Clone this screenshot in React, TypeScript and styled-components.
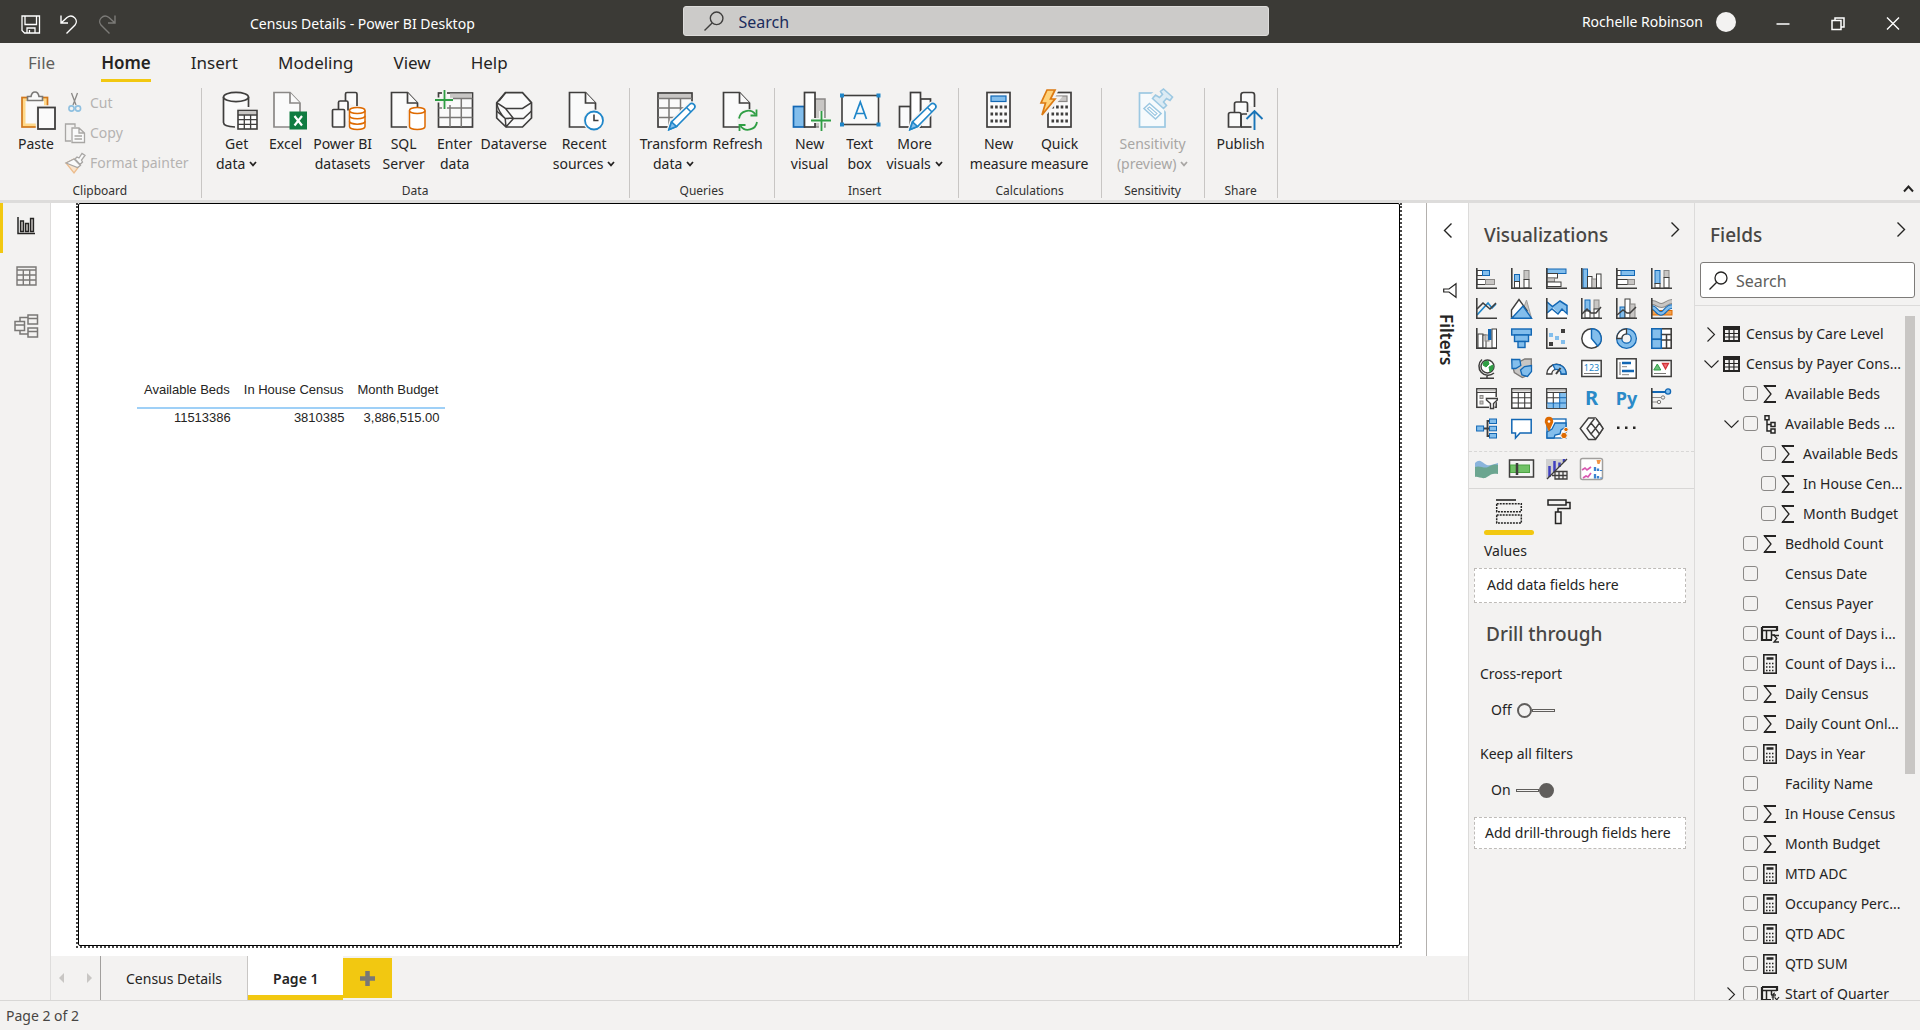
import React, { ReactNode } from "react";
import styled, { createGlobalStyle, css } from "styled-components";

const INK = "#252423";
const LINE = "#3f3e3d";
const BLUE = "#1267b4";
const SKY = "#83beec";
const GREY = "#c8c6c4";
const ORANGE = "#de6a00";
const YELLOW = "#f2c811";
const PANEL = "#f3f2f1";

const GlobalStyle = createGlobalStyle`
  *, *::before, *::after { box-sizing: border-box; }
  body {
    margin: 0;
    background: ${PANEL};
    color: ${INK};
    font-family: "Noto Sans", "Open Sans", sans-serif;
    font-size: 14px;
    line-height: 20px;
  }
  button, input {
    font: inherit;
    color: inherit;
  }
  button {
    border: 0;
    padding: 0;
    background: none;
  }
  h2, h3, p, ul { margin: 0; padding: 0; }
  ul { list-style: none; }
  svg { display: block; flex: none; overflow: visible; }
`;

/* ---------- shell ---------- */

const Shell = styled.div`
  display: flex;
  flex-direction: column;
  height: 100vh;
  overflow: hidden;
`;

const TitleBar = styled.header`
  display: grid;
  grid-template-columns: 22fr 586px 21fr;
  align-items: center;
  height: 43px;
  flex: none;
  background: #3b3a36;
  color: #fff;
`;

const TitleLeft = styled.div`
  display: flex;
  align-items: center;
  padding: 5px 0 0 21px;
`;

const QuickTools = styled.div`
  display: flex;
  gap: 18px;
  width: 229px;
`;

const TitleRight = styled.div`
  display: flex;
  align-items: center;
  justify-content: flex-end;
  gap: 13px;
  padding-right: 20px;
`;

const Avatar = styled.span`
  width: 20px;
  height: 20px;
  border-radius: 50%;
  background: ${PANEL};
`;

const WindowButtons = styled.div`
  display: flex;
  gap: 41px;
  padding: 4px 0 0 27px;
`;

const GlobalSearch = styled.label`
  display: flex;
  align-items: center;
  gap: 15px;
  height: 30px;
  margin-bottom: 1px;
  padding: 0 20px;
  border: 1px solid #dddcda;
  border-radius: 3px;
  background: #cccbc9;
`;

const SearchInput = styled.input<{ $tint: string }>`
  flex: 1;
  min-width: 0;
  padding: 1px 0 0;
  border: 0;
  outline: 0;
  background: none;
  font-size: 16px;
  line-height: 22px;
  &::placeholder {
    color: ${(p) => p.$tint};
    opacity: 1;
  }
`;

/* ---------- ribbon ---------- */

const MenuBar = styled.nav`
  display: flex;
  align-items: stretch;
  gap: 40px;
  height: 39px;
  flex: none;
  padding-left: 28px;
`;

const MenuTab = styled.button<{ $active?: boolean; $soft?: boolean }>`
  padding-top: 3px;
  border-bottom: 3px solid ${(p) => (p.$active ? YELLOW : "transparent")};
  font-size: 17px;
  line-height: 24px;
  font-weight: ${(p) => (p.$active ? 600 : 400)};
  color: ${(p) => (p.$soft ? "#605e5c" : INK)};
  &:first-child { margin-right: 6px; }
`;

const Ribbon = styled.div`
  display: flex;
  height: 121px;
  flex: none;
  padding: 6px 0 2px;
  border-bottom: 3px solid #dddcdb;
`;

const Group = styled.section<{ $left?: number; $right?: number }>`
  display: flex;
  flex-direction: column;
  justify-content: space-between;
  flex: none;
  padding: 3px ${(p) => p.$right ?? 8}px 0 ${(p) => p.$left ?? 8}px;
  border-right: 1px solid #c8c6c4;
`;

const GroupItems = styled.div`
  display: flex;
`;

const GroupLabel = styled.h3`
  font-size: 12px;
  font-weight: 400;
  line-height: 14px;
  text-align: center;
  color: #323130;
`;

const BigButton = styled.button<{ $width: number; $off?: boolean }>`
  display: flex;
  flex-direction: column;
  align-items: center;
  justify-content: flex-start;
  gap: 3px;
  width: ${(p) => p.$width}px;
  white-space: nowrap;
  color: ${(p) => (p.$off ? "#a8a6a4" : INK)};
`;

const Caption = styled.span`
  display: flex;
  align-items: center;
  justify-content: center;
  gap: 4px;
`;

const ButtonStack = styled.div`
  display: flex;
  flex-direction: column;
  gap: 10px;
  padding-top: 2px;
`;

const SmallButton = styled.button`
  display: flex;
  align-items: center;
  gap: 5px;
  color: #b5b3b1;
`;

const CollapseRibbon = styled.button`
  align-self: flex-end;
  margin-left: auto;
  padding: 0 6px 6px 0;
`;

/* ---------- workspace ---------- */

const Workspace = styled.div`
  display: flex;
  flex: 1;
  min-height: 0;
`;

const ViewRail = styled.nav`
  display: flex;
  flex-direction: column;
  width: 51px;
  flex: none;
  border-right: 1px solid #dedddc;
`;

const RailButton = styled.button<{ $active?: boolean }>`
  display: grid;
  place-items: center;
  height: 50px;
  padding: 0 1px 4px 0;
  border-left: 3px solid ${(p) => (p.$active ? YELLOW : "transparent")};
`;

const Center = styled.main`
  display: flex;
  flex-direction: column;
  flex: 1;
  min-width: 0;
`;

const Stage = styled.div`
  display: flex;
  flex: 1;
  min-height: 0;
  background: #fff;
`;

const CanvasArea = styled.div`
  display: flex;
  flex: 1;
  padding: 0 24px 8px 25px;
`;

const Selection = styled.div`
  display: flex;
  flex: 1;
  border: 2px dotted #4a4948;
  border-top: 0;
`;

const ReportPage = styled.div`
  flex: 1;
  padding: 171px 0 0 58px;
  border: 1px solid #000;
  border-radius: 2px;
`;

const DataTable = styled.table`
  border-collapse: separate;
  border-spacing: 0;
  font-family: "Liberation Sans", Arial, sans-serif;
  font-size: 13px;
  line-height: 18px;
  th, td {
    padding: 0 7px;
    text-align: right;
    font-weight: 400;
    white-space: nowrap;
  }
  th {
    padding-top: 6px;
    padding-bottom: 8px;
    border-bottom: 2px solid #9fd0f7;
  }
  td {
    padding-right: 6px;
  }
`;

const FiltersPane = styled.aside`
  display: flex;
  flex-direction: column;
  align-items: center;
  width: 42px;
  flex: none;
  padding-top: 20px;
  border-left: 1px solid #b3b0ad;
`;

const FiltersLabel = styled.h2`
  margin: 16px 4px 0 0;
  writing-mode: vertical-rl;
  font-size: 17px;
  font-weight: 600;
  line-height: 22px;
`;

const FunnelSlot = styled.div`
  padding: 45px 0 0 4px;
`;

const PageTabs = styled.div`
  display: flex;
  height: 44px;
  flex: none;
`;

const TabArrows = styled.div`
  display: flex;
  align-items: center;
  gap: 23px;
  width: 50px;
  padding: 0 8px;
  border-right: 1px solid #a19f9d;
`;

const ArrowButton = styled.button`
  display: flex;
`;

const PageTab = styled.button<{ $active?: boolean }>`
  padding: 1px 25px 0;
  border-right: 1px solid #c8c6c4;
  ${(p) =>
    p.$active &&
    css`
      padding-top: 6px;
      border-bottom: 5px solid ${YELLOW};
      border-right: 0;
      background: #fff;
      font-weight: 600;
    `}
`;

const AddPage = styled.button`
  display: grid;
  place-items: center;
  width: 49px;
  margin: 2px 0;
  background: ${YELLOW};
`;

const StatusBar = styled.footer`
  height: 30px;
  flex: none;
  padding: 5px 6px;
  border-top: 1px solid #d8d7d6;
  color: #484644;
`;

/* ---------- side panels ---------- */

const Panel = styled.aside<{ $width: number }>`
  display: flex;
  flex-direction: column;
  width: ${(p) => p.$width}px;
  flex: none;
  min-height: 0;
  border-left: 1px solid #dcdbda;
`;

const PanelHead = styled.div`
  display: flex;
  justify-content: space-between;
  padding: 19px 15px 0;
`;

const Heading = styled.h2`
  font-size: 19px;
  font-weight: 500;
  line-height: 26px;
  color: #484644;
`;

const IconButton = styled.button`
  display: flex;
  align-self: flex-start;
`;

const VisualButtonBox = styled.button`
  display: flex;
`;

const VisualGrid = styled.div`
  display: grid;
  grid-template-columns: repeat(6, 35px);
  grid-auto-rows: 30px;
  place-items: center;
`;

const StandardVisuals = styled(VisualGrid)`
  padding: 15px 0 8px;
  border-bottom: 1px dashed #d8d7d6;
`;

const CustomVisuals = styled(VisualGrid)`
  padding: 2px 0 4px;
  border-bottom: 1px solid #d8d7d6;
`;

const GlyphText = styled.span<{ $size: number }>`
  font-size: ${(p) => p.$size}px;
  font-weight: 700;
  line-height: 20px;
  color: #2a8ac8;
`;

const Modes = styled.div`
  display: flex;
  padding: 10px 0 0 15px;
`;

const ModeTab = styled.button<{ $active?: boolean }>`
  display: flex;
  flex-direction: column;
  align-items: center;
  gap: 6px;
  width: 50px;
  &::after {
    content: "";
    width: 50px;
    height: 5px;
    border-radius: 3px;
    background: ${(p) => (p.$active ? YELLOW : "transparent")};
  }
`;

const WellLabel = styled.h3`
  padding: 6px 15px 7px;
  font-size: 14px;
  font-weight: 400;
`;

const Well = styled.div<{ $compact?: boolean }>`
  margin: ${(p) => (p.$compact ? 10 : 0)}px 8px 0 5px;
  padding: ${(p) => (p.$compact ? "5px 10px" : "6px 12px 7px")};
  border: 1px dashed #bebbb8;
  background: #fff;
  white-space: nowrap;
`;

const DrillTitle = styled(Heading)`
  padding: 18px 17px 0;
`;

const OptionLabel = styled.p`
  padding: 17px 11px 0;
`;

const ToggleRow = styled.label`
  display: flex;
  align-items: center;
  gap: 5px;
  padding: 16px 22px 7px;
`;

const Toggle = styled.input`
  appearance: none;
  display: flex;
  align-items: center;
  width: 38px;
  height: 15px;
  margin: 0;
  &::before {
    content: "";
    order: 1;
    width: 15px;
    height: 15px;
    border: 2px solid #605e5c;
    border-radius: 50%;
  }
  &::after {
    content: "";
    order: 2;
    flex: 1;
    height: 3px;
    border: 1px solid #605e5c;
  }
  &:checked::before {
    order: 3;
    background: #605e5c;
  }
`;

const FieldSearch = styled.label`
  display: flex;
  align-items: center;
  gap: 8px;
  height: 36px;
  margin: 14px 5px 7px;
  padding: 0 8px;
  border: 1px solid #7d7b79;
  border-radius: 3px;
  background: #fff;
`;

const FieldScroller = styled.div`
  display: flex;
  align-items: flex-start;
  flex: 1;
  min-height: 0;
  overflow: hidden;
  border-top: 1px solid #dcdbda;
`;

const FieldList = styled.ul`
  flex: 1;
  min-width: 0;
  padding-top: 13px;
`;

const FieldRow = styled.li<{ $level: number }>`
  display: flex;
  align-items: center;
  height: 30px;
  padding-left: ${(p) => [6, 26, 44][p.$level]}px;
  line-height: 16px;
  white-space: nowrap;
`;

const Expander = styled.button`
  display: grid;
  place-items: center;
  width: 20px;
  height: 20px;
  margin-right: 2px;
  flex: none;
`;

const TableMark = styled.span`
  display: flex;
  width: 23px;
  flex: none;
`;

const FieldLabel = styled.label`
  display: flex;
  align-items: center;
`;

const Check = styled.input`
  appearance: none;
  width: 15px;
  height: 15px;
  margin: 0 2px 2px 0;
  border: 1px solid #8a8886;
  border-radius: 3px;
  background: ${PANEL};
`;

const FieldMark = styled.span`
  display: grid;
  place-items: center;
  width: 20px;
  height: 20px;
  margin-right: 5px;
`;

const ScrollTrack = styled.div`
  display: flex;
  align-self: stretch;
  width: 15px;
  flex: none;
  padding-top: 10px;
`;

const ScrollThumb = styled.div`
  width: 10px;
  height: 67%;
  background: #c8c6c4;
`;

/* ---------- small drawings ---------- */

const Svg = ({ w, h, children }: { w: number; h: number; children: ReactNode }) => (
  <svg width={w} height={h} viewBox={`0 0 ${w} ${h}`} fill="none" stroke={LINE} aria-hidden="true">
    {children}
  </svg>
);

const Magnifier = ({ s = 19, color = LINE }: { s?: number; color?: string }) => (
  <svg width={s} height={s} viewBox="0 0 19 19" fill="none" stroke={color} strokeWidth="1.3" aria-hidden="true">
    <circle cx="12" cy="7" r="6" />
    <path d="M7.7 11.3 0.5 18.5" />
  </svg>
);

const Chevron = ({ d, w = 8, h = 15, sw = 1.4 }: { d: string; w?: number; h?: number; sw?: number }) => (
  <Svg w={w} h={h}>
    <path d={d} strokeWidth={sw} stroke={INK} />
  </Svg>
);

const RIGHT = "M.5.5 7.5 7.5.5 14.5";
const LEFT = "M7.5.5.5 7.5 7.5 14.5";

const DownTick = ({ color = INK }: { color?: string }) => (
  <svg width="8" height="6" viewBox="0 0 8 6" fill="none" stroke={color} strokeWidth="1.7" aria-hidden="true">
    <path d="M1 1 4 4.4 7 1" />
  </svg>
);

const Page = ({ x, stroke = LINE, w = 26 }: { x: number; stroke?: string; w?: number }) => (
  <g stroke={stroke} strokeWidth="1.7">
    <path d={`M${x} 1.5H${x + w - 10}L${x + w} 12V36H${x}Z`} fill="#fafafa" />
    <path d={`M${x + w - 10} 1.5V12H${x + w}`} fill="#fafafa" />
  </g>
);

const Cylinder = ({ x, y, w, h, rings = 0 }: { x: number; y: number; w: number; h: number; rings?: number }) => {
  const r = w / 2;
  const arc = (yy: number) => `M${x} ${yy}a${r} 3 0 0 0 ${w} 0`;
  return (
    <g stroke={ORANGE} strokeWidth="1.5">
      <path d={`M${x} ${y + 3}v${h - 6}a${r} 3 0 0 0 ${w} 0v${-(h - 6)}`} fill="#fff" stroke={PANEL} strokeWidth="5" />
      <path d={`M${x} ${y + 3}v${h - 6}a${r} 3 0 0 0 ${w} 0v${-(h - 6)}`} fill="#fff" />
      <ellipse cx={x + r} cy={y + 3} rx={r} ry="3" fill="#fff" />
      {Array.from({ length: rings }, (_, i) => (
        <path key={i} d={arc(y + 3 + ((i + 1) * (h - 6)) / (rings + 1))} />
      ))}
    </g>
  );
};

const Pencil = () => (
  <g stroke="#1f86c9" strokeWidth="1.6">
    <path d="M15 38.5 17.5 31 35.5 13.5a2.8 2.8 0 0 1 4.5 4.3L22.5 35.5Z" fill="#fff" stroke={PANEL} strokeWidth="4.5" />
    <path d="M15 38.5 17.5 31 35.5 13.5a2.8 2.8 0 0 1 4.5 4.3L22.5 35.5Z" fill="#fff" />
    <path d="M15 38.5 17.5 31 22.5 35.5Z" fill={SKY} />
    <path d="M32.5 16.5 37 21" />
  </g>
);

const Pad = ({ x = 8 }: { x?: number }) => (
  <g strokeWidth="1.7">
    <rect x={x} y="1.5" width="23" height="34.5" fill="#fafafa" />
    {[0, 1, 2, 3].map((c) =>
      [0, 1, 2].map((r) => (
        <rect key={`${c}-${r}`} x={x + 3.5 + c * 4.6} y={14.5 + r * 7} width="2.6" height="3" fill={LINE} stroke="none" />
      )),
    )}
  </g>
);

/* ---------- ribbon drawings, 40px box ---------- */

const ribbonArt: Record<string, ReactNode> = {
  paste: (
    <>
      <rect x="6" y="6.500" width="25.500" height="29.500" fill="#ffd98a" stroke="#d0771b" strokeWidth="1.700" />
      <rect x="9.500" y="10" width="18.500" height="22.500" fill="#fafafa" stroke="none" />
      <path d="M11.500 9.500V5.500H15C15.500 2.500 17 1 19 1s3.500 1.500 4 4.500h3.500v4Z" fill="#fafafa" stroke="#7a7876" strokeWidth="1.600" />
      <rect x="22" y="16.500" width="17" height="21.500" fill="#fafafa" stroke={PANEL} strokeWidth="4.500" />
      <rect x="22" y="16.500" width="17" height="21.500" fill="#fafafa" strokeWidth="1.800" />
    </>
  ),
  getData: (
    <>
      <path d="M6.500 6v26c0 2.800 6 4 14 4V17h11V6" fill="#fafafa" stroke="none" />
      <path d="M6.500 6v25.500c0 2.500 5 4.200 11.500 4.500M31.500 6v10" strokeWidth="1.700" />
      <ellipse cx="19" cy="6" rx="12.500" ry="4.700" fill="#fafafa" strokeWidth="1.700" />
      <rect x="21" y="19.500" width="19" height="18.500" fill="#fff" strokeWidth="1.600" />
      <rect x="22" y="20.500" width="17" height="3" fill={GREY} stroke="none" />
      <path d="M21 24h19M21 28.700h19M21 33.400h19M27.300 24v14M33.600 24v14" strokeWidth="1.300" />
    </>
  ),
  excel: (
    <>
      <Page x={8} stroke="#8a8886" />
      <rect x="23.500" y="20.500" width="17.500" height="18" fill="#107c41" stroke="none" />
      <path d="m28.500 25 7.500 9.500M36 25l-7.500 9.500" stroke="#fff" strokeWidth="2.200" />
    </>
  ),
  datasets: (
    <>
      <path d="M22.500 12V3q0-1.500 1.500-1.500h8.500Q34 1.500 34 3v12" fill="#fafafa" strokeWidth="1.700" />
      <path d="M15.500 18v-6.500q0-1.500 1.500-1.500h6.500q1.500 0 1.500 1.500V33" fill="#fafafa" strokeWidth="1.700" />
      <rect x="9.500" y="18.500" width="12" height="17.500" rx="1" fill="#fafafa" strokeWidth="1.700" />
      <Cylinder x={26.500} y={16.500} w={15.500} h={22} rings={2} />
    </>
  ),
  sql: (
    <>
      <Page x={7.500} />
      <Cylinder x={25.500} y={16.500} w={15.500} h={22} />
    </>
  ),
  enter: (
    <>
      <rect x="3.500" y="2" width="34" height="34" fill="#fafafa" strokeWidth="1.700" />
      <rect x="15" y="2.500" width="22" height="4.500" fill={GREY} stroke="none" />
      <path d="M15 7.500h22.500M3.500 17h34M3.500 26.500h34M15 14v22M26.300 8v28" stroke="#7a7876" strokeWidth="1.500" />
      <path d="M1 9h17M9.500-1v19" stroke={PANEL} strokeWidth="5" />
      <path d="M0 9h18M9.500-1v19" stroke="#2f9e44" strokeWidth="1.800" />
    </>
  ),
  dataverse: (
    <>
      <path d="M11.500 1.700h17l9 10V27l-9 9h-16.500L2.700 27V11.700Z" fill="#fafafa" strokeWidth="1.700" />
      <path d="M2.700 11.700 11.500 17.500h17l9-5.800M37.500 20 29.500 27.500H19.500L11.500 17.500M19.500 27.500 12 36M2.700 20l8.500 7.500 8-.500M11.500 1.700 5 10M2.700 12c1 6 5 12 8.500 15.500L12 36" strokeWidth="1.500" />
    </>
  ),
  recent: (
    <>
      <Page x={5.500} />
      <circle cx="30" cy="29.500" r="11" fill={PANEL} stroke="none" />
      <circle cx="30" cy="29.500" r="9" fill="#fff" stroke="#1f86c9" strokeWidth="1.800" />
      <path d="M30 23.500v6h4.500" strokeWidth="1.600" />
    </>
  ),
  transform: (
    <>
      <rect x="4" y="2" width="34" height="34" fill="#fafafa" strokeWidth="1.700" />
      <rect x="5" y="3" width="32" height="4" fill={GREY} stroke="none" />
      <path d="M4 7.500h34M4 17h34M4 26.500h34M15 8v28M26.500 8v28" stroke="#7a7876" strokeWidth="1.500" />
      <path d="M38 21v15H24" stroke={PANEL} strokeWidth="4" />
      <path d="M36 21h3v16H25v-5Z" fill={PANEL} stroke="none" />
      <Pencil />
    </>
  ),
  refresh: (
    <>
      <Page x={5.500} />
      <circle cx="30" cy="29" r="11" fill={PANEL} stroke="none" />
      <g stroke="#2f9e44" strokeWidth="1.800">
        <path d="M21 27.500a9.200 9.200 0 0 1 16.500-4M39 31a9.200 9.200 0 0 1-16.500 4" />
        <path d="M38.500 18.500v6h-6M21.500 40v-6h6" />
      </g>
    </>
  ),
  newVisual: (
    <>
      <rect x="3.500" y="15.500" width="11" height="20.500" fill={SKY} stroke={BLUE} strokeWidth="1.700" />
      <rect x="25" y="8" width="10" height="28" fill={GREY} stroke="#8a8886" strokeWidth="1.500" />
      <rect x="14.500" y="1.500" width="10.500" height="34.500" fill="#fff" strokeWidth="1.700" />
      <path d="M22 29.500h19M31.500 20v19" stroke={PANEL} strokeWidth="5" />
      <path d="M21 29.500h20M31.500 20v20" stroke="#2f9e44" strokeWidth="1.800" />
    </>
  ),
  textBox: (
    <>
      <rect x="2" y="4.500" width="36.500" height="29" fill="#fafafa" strokeWidth="1.600" />
      <g fill="#1f86c9" stroke="none">
        <rect y="2.500" width="4" height="4" />
        <rect x="36.500" y="2.500" width="4" height="4" />
        <rect y="31.500" width="4" height="4" />
        <rect x="36.500" y="31.500" width="4" height="4" />
      </g>
      <path d="M14 28 20.300 11 26.500 28M16.300 22.500h8.200" stroke="#1f86c9" strokeWidth="1.700" />
    </>
  ),
  moreVisuals: (
    <>
      <rect x="4.500" y="15.500" width="11" height="20.500" fill="#fafafa" strokeWidth="1.700" />
      <rect x="25.500" y="8" width="10" height="28" fill="#fafafa" strokeWidth="1.700" />
      <rect x="15.500" y="1.500" width="10" height="34.500" fill="#fff" strokeWidth="1.700" />
      <Pencil />
    </>
  ),
  measure: (
    <>
      <Pad />
      <rect x="12" y="5" width="15" height="5.500" fill={SKY} stroke={BLUE} strokeWidth="1.200" />
    </>
  ),
  quick: (
    <>
      <Pad />
      <rect x="14" y="5" width="13" height="5.500" fill={GREY} stroke="#8a8886" strokeWidth="1.200" />
      <path d="M7-1h9l-4.500 9H17L2 25l3.500-12.500H0Z" fill={PANEL} stroke={PANEL} strokeWidth="5" />
      <path d="M7-1h8l-4.500 9H15L2 24l3.500-12H1Z" fill="#ffd27a" stroke="#dc7a12" strokeWidth="1.700" />
    </>
  ),
  sensitivity: (
    <g stroke="#9cc8e2">
      <rect x="6.500" y="2" width="25.500" height="34" fill="#f6fafc" strokeWidth="1.700" />
      <path d="m20 4 6-5 14 9-6 11Z" fill={PANEL} stroke={PANEL} strokeWidth="4" />
      <path d="m11 17.500 5.500-5L28 22.500l-5.500 5.500Z" fill="#fff" strokeWidth="1.600" />
      <path d="m14.500 17.500 2-1.500 7.500 6.500-2 2Z" strokeWidth="1.200" />
      <path d="m19.500 7.500 3-3.500 4 2.500 3-3-2-3 3-2.500 9 8-2.500 3.500-3.500-2-3 3.500 3 3.500-3 3Z" fill="#dcebf4" strokeWidth="1.600" />
    </g>
  ),
  publish: (
    <g strokeWidth="1.700">
      <path d="M20 12V4q0-2.500 2.500-2.500H31Q33.500 1.500 33.500 4v12" fill="#fafafa" />
      <path d="M13.500 21v-8q0-2 2-2h9q2 0 2 2v8" fill="#fafafa" />
      <path d="M7.500 36V23.500q0-2 2-2H18q2 0 2 2V36Z" fill="#fafafa" />
      <path d="M20 36V25q0-2 2-2h4" />
      <path d="M20 36h10.500" />
      <path d="M33.500 39V21M25.500 28l8-8 8 8" stroke={PANEL} strokeWidth="5" />
      <path d="M33.500 39V21M25.500 28l8-8 8 8" stroke="#1a75b8" strokeWidth="1.900" />
    </g>
  ),
};

type RibbonItem = { art: string; width: number; lines: string[]; menu?: boolean; off?: boolean };
type RibbonGroup = { title: string; left?: number; right?: number; items: RibbonItem[] };

const ribbonGroups: RibbonGroup[] = [
  {
    title: "Data",
    items: [
      { art: "getData", width: 54, lines: ["Get", "data"], menu: true },
      { art: "excel", width: 44, lines: ["Excel"] },
      { art: "datasets", width: 70, lines: ["Power BI", "datasets"] },
      { art: "sql", width: 52, lines: ["SQL", "Server"] },
      { art: "enter", width: 50, lines: ["Enter", "data"] },
      { art: "dataverse", width: 68, lines: ["Dataverse"] },
      { art: "recent", width: 73, lines: ["Recent", "sources"], menu: true },
    ],
  },
  {
    title: "Queries",
    items: [
      { art: "transform", width: 72, lines: ["Transform", "data"], menu: true },
      { art: "refresh", width: 56, lines: ["Refresh"] },
    ],
  },
  {
    title: "Insert",
    left: 11,
    right: 14,
    items: [
      { art: "newVisual", width: 48, lines: ["New", "visual"] },
      { art: "textBox", width: 52, lines: ["Text", "box"] },
      { art: "moreVisuals", width: 58, lines: ["More", "visuals"], menu: true },
    ],
  },
  {
    title: "Calculations",
    left: 10,
    right: 10,
    items: [
      { art: "measure", width: 60, lines: ["New", "measure"] },
      { art: "quick", width: 62, lines: ["Quick", "measure"] },
    ],
  },
  {
    title: "Sensitivity",
    items: [{ art: "sensitivity", width: 86, lines: ["Sensitivity", "(preview)"], menu: true, off: true }],
  },
  { title: "Share", items: [{ art: "publish", width: 56, lines: ["Publish"] }] },
];

/* ---------- visual gallery drawings, 21px box ---------- */

const Axis = () => <path d="M.800 0v20.200H21" strokeWidth="1.600" />;
const Lit = (p: React.SVGProps<SVGRectElement>) => <rect fill={SKY} stroke={BLUE} {...p} />;
const Dim = (p: React.SVGProps<SVGRectElement>) => <rect fill={GREY} stroke="#8a8886" {...p} />;
const Blank = (p: React.SVGProps<SVGRectElement>) => <rect fill="#fff" {...p} />;

const gallery: [string, ReactNode][] = [
  ["Stacked bar chart", <><Blank x="1" y="2.500" width="5.500" height="5" /><Lit x="6.500" y="2.500" width="7" height="5" /><Blank x="1" y="11.500" width="8.500" height="5" /><Dim x="9.500" y="11.500" width="9" height="5" /><Axis /></>],
  ["Stacked column chart", <><Lit x="3.500" y="6.500" width="5" height="7" /><Blank x="3.500" y="13.500" width="5" height="6.500" /><Dim x="13" y="2.500" width="5" height="9" /><Blank x="13" y="11.500" width="5" height="8.500" /><Axis /></>],
  ["Clustered bar chart", <><Lit x="1" y="1" width="19" height="4.500" /><Blank x="1" y="5.500" width="10.500" height="4.500" /><Dim x="1" y="10" width="7.500" height="4" /><Blank x="1" y="14" width="14" height="4.500" /><Axis /></>],
  ["Clustered column chart", <><Lit x="2" y="1" width="4.500" height="19" /><Blank x="6.500" y="8.500" width="4.500" height="11.500" /><Dim x="11" y="11" width="4.500" height="9" /><Blank x="15.500" y="6" width="4.500" height="14" /><Axis /></>],
  ["100% stacked bar chart", <><Blank x="1" y="2.500" width="4.500" height="5" /><Lit x="5" y="2.500" width="13.500" height="5" /><Blank x="1" y="11.500" width="11" height="5" /><Dim x="12" y="11.500" width="6.500" height="5" /><Axis /></>],
  ["100% stacked column chart", <><Lit x="4" y="2.500" width="5" height="13" /><Blank x="4" y="15.500" width="5" height="4.500" /><Dim x="13" y="2.500" width="5" height="7" /><Blank x="13" y="9.500" width="5" height="10.500" /><Axis /></>],
  ["Line chart", <><path d="M1 17 12 5l4 5 4-4" stroke="#1f86c9" strokeWidth="1.700" /><path d="m1 11 6-6 7 6 6-6" strokeWidth="1.600" /><Axis /></>],
  ["Area chart", <><path d="M9 20 15.500 2l5 18Z" fill={GREY} stroke="#a19f9d" /><path d="M.500 19V12L8 1.500l8 11-4 7Z" fill="#fff" strokeWidth="1.400" /><path d="M.800 20.200 12 8l8.500 12.200Z" fill={SKY} stroke={BLUE} strokeWidth="1.400" /></>],
  ["Stacked area chart", <><path d="m1 3 5.500 5L14 3l7 5v12H1Z" fill={SKY} stroke="none" /><path d="m1 15 6-5 5 5 5-4 4 3v6H1Z" fill="#fff" stroke="none" /><path d="m1 4 5.500 4.500L14 3l7 4.500v8l-5-4.500-4 5-6-5-5 4" stroke={BLUE} strokeWidth="1.500" /><Axis /></>],
  ["Line and stacked column chart", <><Lit x="4" y="2" width="5" height="11" /><Blank x="4" y="13" width="5" height="7" /><Dim x="13" y="2" width="5" height="9" /><Blank x="13" y="11" width="5" height="9" /><path d="m1 16 5-5 4 4 5 0 5-6" strokeWidth="1.500" /><Axis /></>],
  ["Line and clustered column chart", <><Lit x="4" y="9" width="5" height="11" /><Blank x="9" y="1" width="5" height="19" /><Dim x="14" y="6" width="5" height="14" /><path d="m1 17 6-5 4 3 3 0 6-6" strokeWidth="1.500" /><Axis /></>],
  ["Ribbon chart", <><rect x="1" y="12.500" width="20" height="4.500" fill="#f2a04d" stroke={ORANGE} /><path d="M1 4.500c5 0 5 3 9.500 3S16 3.500 21 3.500" stroke="#8a8886" strokeWidth="5" /><path d="M1 4.500c5 0 5 3 9.500 3S16 3.500 21 3.500" stroke={GREY} strokeWidth="3" /><path d="M1 9.500c4 0 5 6 9 6s5-7 11-7" stroke={BLUE} strokeWidth="4.500" /><path d="M1 9.500c4 0 5 6 9 6s5-7 11-7" stroke={SKY} strokeWidth="2.500" /><Axis /></>],
  ["Waterfall chart", <><Blank x="2" y="6" width="5" height="14" /><Blank x="7" y="7" width="3" height="13" /><Dim x="9" y="7" width="4" height="6" /><rect x="12" y="1" width="3.500" height="11" fill={BLUE} stroke="none" /><Blank x="16" y="1" width="4.500" height="19" /><Axis /></>],
  ["Funnel chart", <><Lit x=".700" y="1" width="19.600" height="6" strokeWidth="1.400" /><Lit x="3.500" y="7" width="14" height="6.500" strokeWidth="1.400" /><Lit x="7" y="13.500" width="7" height="6" strokeWidth="1.400" /></>],
  ["Scatter chart", <><Axis /><g stroke="none"><path d="M3 5h4v4H3ZM9 8h4v4H9ZM15 12h4v4h-4Z" fill={SKY} /><path d="M15 1h4v4h-4ZM3 14h4v4H3Z" fill={LINE} /></g></>],
  ["Pie chart", <><circle cx="10.500" cy="10.500" r="9.700" fill="#fff" strokeWidth="1.500" /><path d="M10.500.800a9.700 9.700 0 0 1 6.200 17.200l-6.200-7.500Z" fill={SKY} stroke={BLUE} strokeWidth="1.400" /></>],
  ["Donut chart", <><circle cx="10.500" cy="10.500" r="7.300" stroke={BLUE} strokeWidth="6.500" /><circle cx="10.500" cy="10.500" r="7.300" stroke={SKY} strokeWidth="4" /><path d="M10.500.800a9.700 9.700 0 0 0-9.700 9.700h5a4.700 4.700 0 0 1 4.700-4.700Z" fill="#fff" strokeWidth="1.300" /></>],
  ["Treemap", <><Blank x=".800" y=".800" width="19.400" height="19.400" strokeWidth="1.600" /><Lit x=".800" y=".800" width="9.500" height="10.500" strokeWidth="1.500" /><Lit x=".800" y="11.300" width="9.500" height="9" strokeWidth="1.500" /><path d="M10.500 6.500h10M10.500 12h10M15.500 6.500V20" strokeWidth="1.500" /></>],
  ["Map", <><circle cx="11.500" cy="8.500" r="6.500" fill="#fff" strokeWidth="1.400" /><path d="m8 4 4-1 1 3-3 3-3-2ZM13 9l4-2v4l-3 3Z" fill="#2f9e44" stroke="#2f9e44" /><path d="M6 1.500a9 9 0 1 0 12 13.500M11 18v2M4 20.300h14" strokeWidth="1.500" /></>],
  ["Filled map", <><path d="m.800 1.500 8 2 5-2.500h6.500v9.500l-4 7-5 2-8-5-1-4Z" fill={GREY} stroke="#7a7876" strokeWidth="1.300" /><path d="M.800 1.500h8l1 6-5 3H1Z" fill={SKY} stroke={BLUE} strokeWidth="1.300" /><path d="m11 17-1.500-5 4-3.500 7-1v6l-4 5Z" fill={SKY} stroke={BLUE} strokeWidth="1.300" /></>],
  ["Gauge", <><path d="M.800 16a9.700 9.700 0 0 1 19.400 0h-5a4.700 4.700 0 0 0-9.400 0Z" fill="#fff" strokeWidth="1.400" /><path d="M7 7a9.700 9.700 0 0 1 13.200 9h-5a4.700 4.700 0 0 0-6-4.500Z" fill={SKY} stroke={BLUE} strokeWidth="1.300" /><path d="m10 16 4.500-6" strokeWidth="2" /></>],
  ["Card", <><rect x=".800" y="2.500" width="19.400" height="16" fill="#fff" strokeWidth="1.500" /><path d="M3 15.500h15" stroke="#7a7876" /><text x="10.500" y="13" fontSize="9" textAnchor="middle" fill="#1f86c9" stroke="none" fontFamily="Noto Sans">123</text></>],
  ["Multi-row card", <><rect x=".800" y=".800" width="19.400" height="19.400" fill="#fff" strokeWidth="1.500" /><path d="M4 4v13" stroke="#8a8886" strokeWidth="1.300" /><path d="M6 5h9M6 13h12" stroke={BLUE} strokeWidth="2.400" /><path d="M6 8.700h5M6 16.700h7" stroke="#8a8886" /></>],
  ["KPI", <><rect x=".800" y="2.500" width="19.400" height="16" fill="#fff" strokeWidth="1.500" /><path d="m2.800 12 3.500-6 3.500 6Z" fill="#6cbf7c" stroke="#2f9e44" /><path d="m11.500 5.500 3 5.500 3-5.500Z" fill="#f1707a" stroke="#d13438" strokeWidth="1.300" /><path d="M3 15.500h12" stroke="#7a7876" /></>],
  ["Slicer", <><rect x=".800" y=".800" width="19.400" height="18.500" fill="#fff" strokeWidth="1.500" /><path d="M1.500 2.500h18" stroke={GREY} strokeWidth="2" /><path d="M1 4.500h19" /><Dim x="4" y="7.500" width="3" height="3" /><Dim x="4" y="13" width="3" height="3" /><path d="M9 9h13v3.500L18.500 16v6H13v-6l-4-4Z" fill={PANEL} stroke="none" /><path d="M10.500 10.500h10.800v1.500L17.500 15.500v5h-3v-5l-4-3.500Z" fill="#fff" strokeWidth="1.400" /></>],
  ["Table", <><rect x=".800" y=".800" width="19.400" height="19.400" fill="#fff" strokeWidth="1.500" /><path d="M1.500 2.500h18" stroke={GREY} strokeWidth="2" /><path d="M1 4.500h19M1 9.700h19M1 15h19M7.300 4.500V20M13.700 4.500V20" strokeWidth="1.100" /></>],
  ["Matrix", <><rect x=".800" y=".800" width="19.400" height="19.400" fill="#fff" strokeWidth="1.500" /><path d="M1.500 2.500h18" stroke={GREY} strokeWidth="2" /><path d="M13.700 5h6.500v15H1.500v-5h12Z" fill={SKY} stroke="none" /><path d="M13.700 5v15M7.300 15v5M1 15h19M13.700 9.700h6.500" stroke={BLUE} /><path d="M1 4.500h19M1 9.700h12.500M7.300 4.500V15" strokeWidth="1.100" /></>],
  ["R script visual", <GlyphText $size={20}>R</GlyphText>],
  ["Python visual", <GlyphText $size={18}>Py</GlyphText>],
  ["Key influencers", <><path d="M1 4h13" stroke={BLUE} strokeWidth="2" /><circle cx="17" cy="3.500" r="2.600" fill={SKY} stroke={BLUE} strokeWidth="1.300" /><path d="M1 9.500h9M1 14h5" stroke="#8a8886" /><circle cx="12" cy="9.500" r="1.700" stroke="#7a7876" /><circle cx="8" cy="14" r="1.700" stroke="#7a7876" /><Axis /></>],
  ["Decomposition tree", <><path d="M7 10.500h4M18 3h-6.500v15H18M11 10.500h3" strokeWidth="1.800" /><Lit x=".600" y="8" width="7" height="5" /><Lit x="13.500" y="1" width="7" height="4.500" /><Lit x="13.500" y="8.300" width="7" height="4.500" /><Lit x="13.500" y="15.500" width="7" height="4.500" /></>],
  ["Q&A", <path d="M.800 1.500h19.400V15H9l-4.500 5v-5H.800Z" fill="#fff" stroke={BLUE} strokeWidth="1.500" />],
  ["ArcGIS map", <><rect x="1" y="1" width="19" height="19" fill="#fff" stroke={BLUE} strokeWidth="1.300" /><path d="M9 5h11v4l-5 3-1 4-5 1-1 3H1v-6l5-3 2-4Z" fill={SKY} stroke={BLUE} strokeWidth="1.300" /><path d="M3-.500q-3.500 0-3.500 4.500L3 12l3.500-8Q6.500-.500 3-.500Z" fill={ORANGE} stroke={ORANGE} strokeWidth="1.500" /><circle cx="3" cy="3.500" r="1.300" fill="#fff" stroke="none" /><circle cx="18" cy="17.500" r="3.200" fill={ORANGE} stroke={PANEL} /><circle cx="20" cy="11.500" r="2.200" fill={ORANGE} stroke={PANEL} /></>],
  ["Power Apps", <g strokeWidth="1.400" fill="#fafafa"><path d="M7.500 0-.800 10.500 7.500 21.500h7L22 10.500 14.500 0Z" /><path d="m15 .500 3.500 4.500-4 5.500-4.500-5.500 3.500-4.500M18.500 5 22 10.500l-3.500 5.500-4-5.500M14.500 10.500l4 5.500-4 5-4.500-5ZM10 5l4.500 5.500L10 16 6 10.500Z" /></g>],
  ["Get more visuals", <g fill={INK} stroke="none"><rect x="1" y="8.500" width="2.500" height="2.500" /><rect x="9" y="8.500" width="2.500" height="2.500" /><rect x="17" y="8.500" width="2.500" height="2.500" /></g>],
];

const customGallery: [string, ReactNode][] = [
  ["Stream graph", <g stroke="none"><path d="M-1 4c4-4 6-2 10 1s8 0 13-1v8H-1Z" fill="#8ab4dc" /><path d="M-1 8c5-2 9 2 13 0s5-3 10-2v9c-5-1-7 0-11 3S2 17-1 18Z" fill="#6ba590" /></g>],
  ["Bullet chart", <><rect x="-1.500" y="1" width="24" height="17" fill="#f4f4f4" strokeWidth="1.500" /><rect x="-.500" y="6" width="19" height="7.500" fill="#70c266" stroke="#4da344" /><path d="M6 4v12" strokeWidth="2.500" /></>],
  ["Chart with table", <><path d="M0 0h20L0 20Z" fill="#d0d0d0" stroke="none" /><path d="M3.500 18V7M8.500 13V2M13.500 8V3.500M18 3V0" stroke="#4040c0" strokeWidth="2.500" /><path d="m1 20 20-20M9 12.500h12V20H9ZM13 12.500V20M17 12.500V20M6 16.500h15" strokeWidth="1.300" /></>],
  ["Small multiples", <><rect x="-.500" y="-.500" width="22" height="21" rx="2" fill="#fff" stroke="#a19f9d" strokeWidth="1.500" /><path d="M15.500 1H20l-1.500 4h-2Z" fill="#f29545" stroke="none" /><path d="m1 11 3-2 2 2 4-3M2 19l3-2 2 1 3-4" stroke="#d957b0" strokeWidth="1.700" /><path d="M14 12V8M17 12V9.500M20 12v-1M14 19.500V15M17 19.500V17M20 19.500v-1" stroke="#3b82d0" strokeWidth="2.300" /></>],
];

const VisualButton = ({ name, art }: { name: string; art: ReactNode }) => (
  <VisualButtonBox title={name} aria-label={name}>
    {React.isValidElement(art) && art.type === GlyphText ? art : <Svg w={21} h={21}>{art}</Svg>}
  </VisualButtonBox>
);

/* ---------- field list ---------- */

type Mark = "sum" | "calc" | "hierarchy" | "calcColumn" | "dateColumn" | "none";

const marks: Record<Mark, ReactNode> = {
  none: null,
  sum: (
    <Svg w={14} h={18}>
      <path d="M13 1H1.500L8 9l-6.500 8H13" stroke={INK} strokeWidth="1.300" />
      <path d="M1 1h12M1 17h12" stroke={INK} strokeWidth="2" />
    </Svg>
  ),
  calc: (
    <Svg w={14} h={20}>
      <rect x=".800" y=".800" width="12.400" height="18.400" stroke={INK} strokeWidth="1.600" />
      <path d="M3.500 4.500h7" stroke={INK} strokeWidth="2.500" />
      <path d="M3 9.500h8M3 13h8M3 16.500h8" stroke={INK} strokeWidth="1.600" strokeDasharray="1.500 1.500" />
    </Svg>
  ),
  hierarchy: (
    <Svg w={12} h={19}>
      <path d="M1 .800h4v4H1ZM7 7.500h4v4H7ZM7 14h4v4H7ZM3 5v11h4M3 9.500h4" stroke={INK} strokeWidth="1.500" />
    </Svg>
  ),
  calcColumn: (
    <Svg w={18} h={16}>
      <path d="M1 1h15v4M1 1v13h10" stroke={INK} strokeWidth="2.200" />
      <path d="M1 4.500h15M5.500 4v10M10.500 4v10M1 14h10M10 9h4" stroke={INK} strokeWidth="1.500" />
      <path d="M18 9.500h-5l3 3-3 3.500h5" stroke={INK} strokeWidth="1.300" />
    </Svg>
  ),
  dateColumn: (
    <Svg w={18} h={16}>
      <path d="M1 1h15v4M1 1v13h9" stroke={INK} strokeWidth="2.200" />
      <path d="M1 4.500h15M5.500 4v10M10.500 4v5M10 9h5" stroke={INK} strokeWidth="1.500" />
      <path d="M14 7q-2 0-2 3v6M10.500 11h4M14 12l4 4M18 11l-4 5" stroke={INK} strokeWidth="1.200" />
    </Svg>
  ),
};

type Field = { text: string; level: 0 | 1 | 2; mark?: Mark; state?: "open" | "closed" };

const fields: Field[] = [
  { text: "Census by Care Level", level: 0, state: "closed" },
  { text: "Census by Payer Cons...", level: 0, state: "open" },
  { text: "Available Beds", level: 1, mark: "sum" },
  { text: "Available Beds ...", level: 1, mark: "hierarchy", state: "open" },
  { text: "Available Beds", level: 2, mark: "sum" },
  { text: "In House Cen...", level: 2, mark: "sum" },
  { text: "Month Budget", level: 2, mark: "sum" },
  { text: "Bedhold Count", level: 1, mark: "sum" },
  { text: "Census Date", level: 1, mark: "none" },
  { text: "Census Payer", level: 1, mark: "none" },
  { text: "Count of Days i...", level: 1, mark: "calcColumn" },
  { text: "Count of Days i...", level: 1, mark: "calc" },
  { text: "Daily Census", level: 1, mark: "sum" },
  { text: "Daily Count Onl...", level: 1, mark: "sum" },
  { text: "Days in Year", level: 1, mark: "calc" },
  { text: "Facility Name", level: 1, mark: "none" },
  { text: "In House Census", level: 1, mark: "sum" },
  { text: "Month Budget", level: 1, mark: "sum" },
  { text: "MTD ADC", level: 1, mark: "calc" },
  { text: "Occupancy Perc...", level: 1, mark: "calc" },
  { text: "QTD ADC", level: 1, mark: "calc" },
  { text: "QTD SUM", level: 1, mark: "calc" },
  { text: "Start of Quarter", level: 1, mark: "dateColumn", state: "closed" },
];

const ExpandMark = ({ state }: { state: "open" | "closed" }) =>
  state === "open" ? (
    <Chevron d="M.500.500 7.500 7.500 14.500.500" w={15} h={8} sw={1.1} />
  ) : (
    <Chevron d={RIGHT} sw={1.1} />
  );

const FieldItem = ({ field }: { field: Field }) => (
  <FieldRow $level={field.level}>
    {field.state ? (
      <Expander aria-label={`Toggle ${field.text}`}>
        <ExpandMark state={field.state} />
      </Expander>
    ) : (
      <Expander as="span" />
    )}
    {field.level === 0 ? (
      <>
        <TableMark>
          <Svg w={17} h={16}>
            <rect width="17" height="16" fill={INK} stroke="none" />
            <path
              d="M2 4h3.500v3H2ZM6.800 4h3.500v3H6.800ZM11.500 4H15v3h-3.500ZM2 8h3.500v2.500H2ZM6.800 8h3.500v2.500H6.800ZM11.500 8H15v2.500h-3.500ZM2 11.500h3.500V14H2ZM6.800 11.500h3.500V14H6.800ZM11.500 11.500H15V14h-3.500Z"
              fill={PANEL}
              stroke="none"
            />
          </Svg>
        </TableMark>
        {field.text}
      </>
    ) : (
      <FieldLabel>
        <Check type="checkbox" />
        <FieldMark>{marks[field.mark ?? "none"]}</FieldMark>
        {field.text}
      </FieldLabel>
    )}
  </FieldRow>
);

/* ---------- app ---------- */

const tabs = ["File", "Home", "Insert", "Modeling", "View", "Help"];

export default function App() {
  return (
    <Shell>
      <GlobalStyle />
      <TitleBar>
        <TitleLeft>
          <QuickTools>
            <IconButton aria-label="Save">
              <svg width="20" height="19" viewBox="0 0 20 19" fill="none" stroke="#fff" strokeWidth="1.300" aria-hidden="true">
                <path d="M1 1h17.500v17H3.500L1 15.500ZM4 1v8.500h11.500V1M6 18v-5h8v5M8.500 15v3" />
              </svg>
            </IconButton>
            <IconButton aria-label="Undo">
              <svg width="20" height="19" viewBox="0 0 20 19" fill="none" stroke="#fff" strokeWidth="1.400" aria-hidden="true">
                <path d="M2 .500V8h7M2 8l6-5.500c6-4.500 12 3 8 7.500l-8.500 8.500" />
              </svg>
            </IconButton>
            <IconButton aria-label="Redo">
              <svg width="20" height="19" viewBox="0 0 20 19" fill="none" stroke="#7c7b78" strokeWidth="1.400" aria-hidden="true">
                <path d="M18 .500V8h-7M18 8l-6-5.500C6-2 0 5.500 4 10l8.500 8.500" />
              </svg>
            </IconButton>
          </QuickTools>
          <span>Census Details - Power BI Desktop</span>
        </TitleLeft>
        <GlobalSearch>
          <Magnifier s={20} />
          <SearchInput $tint="#1b2c5c" placeholder="Search" aria-label="Search" />
        </GlobalSearch>
        <TitleRight>
          <span>Rochelle Robinson</span>
          <Avatar />
          <WindowButtons>
            <IconButton aria-label="Minimize">
              <svg width="14" height="13" viewBox="0 0 14 13" stroke="#fff" strokeWidth="1.500" aria-hidden="true">
                <path d="M.500 7h13" />
              </svg>
            </IconButton>
            <IconButton aria-label="Restore">
              <svg width="14" height="13" viewBox="0 0 14 13" fill="none" stroke="#fff" strokeWidth="1.500" aria-hidden="true">
                <path d="M1 3.500h9v9H1ZM4 3V1h9v9h-2.500" />
              </svg>
            </IconButton>
            <IconButton aria-label="Close">
              <svg width="14" height="13" viewBox="0 0 14 13" stroke="#fff" strokeWidth="1.400" aria-hidden="true">
                <path d="m1 .500 12 12M13 .500l-12 12" />
              </svg>
            </IconButton>
          </WindowButtons>
        </TitleRight>
      </TitleBar>

      <MenuBar>
        {tabs.map((t) => (
          <MenuTab key={t} $active={t === "Home"} $soft={t === "File"}>
            {t}
          </MenuTab>
        ))}
      </MenuBar>

      <Ribbon>
        <Group $left={11} $right={12}>
          <GroupItems>
            <BigButton $width={50}>
              <Svg w={40} h={40}>{ribbonArt.paste}</Svg>
              <span>Paste</span>
            </BigButton>
            <ButtonStack>
              <SmallButton disabled>
                <Svg w={24} h={20}>
                  <path d="M10.500 0 15 12M16.500 0 12 12" stroke="#8a8886" strokeWidth="1.300" />
                  <circle cx="10.500" cy="15.500" r="2.600" stroke="#8fc0e0" strokeWidth="1.600" />
                  <circle cx="17" cy="15.500" r="2.600" stroke="#8fc0e0" strokeWidth="1.600" />
                </Svg>
                Cut
              </SmallButton>
              <SmallButton disabled>
                <Svg w={24} h={20}>
                  <g stroke="#a8a6a4" strokeWidth="1.300">
                    <path d="M10 18H4.500V1H14v3" />
                    <path d="M11 5h7l5.500 5v9.500H11ZM18 5v5h5.500M13.500 13H21M13.500 16H21" fill="#fafafa" />
                  </g>
                </Svg>
                Copy
              </SmallButton>
              <SmallButton disabled>
                <Svg w={24} h={20}>
                  <path d="m5 10 8-4 6 6-6 8Z" fill="#f9e3cb" stroke="#ecbc8d" strokeWidth="1.300" />
                  <path d="m5 10 8-4 6.500 6.500-3 2Z" fill="#fafafa" stroke="#a8a6a4" strokeWidth="1.200" />
                  <path d="m14 6 2-2 2 1 3-4.500 3 2-3.500 4.500 1 2-2.500 2.500Z" fill="#fafafa" stroke="#a8a6a4" strokeWidth="1.300" />
                </Svg>
                Format painter
              </SmallButton>
            </ButtonStack>
          </GroupItems>
          <GroupLabel>Clipboard</GroupLabel>
        </Group>
        {ribbonGroups.map((g) => (
          <Group key={g.title} $left={g.left} $right={g.right}>
            <GroupItems>
              {g.items.map((it) => (
                <BigButton key={it.art} $width={it.width} $off={it.off} disabled={it.off}>
                  <Svg w={40} h={40}>{ribbonArt[it.art]}</Svg>
                  <span>
                    {it.lines.map((line, i) => (
                      <Caption key={line}>
                        {line}
                        {it.menu && i === it.lines.length - 1 && <DownTick color={it.off ? "#a8a6a4" : INK} />}
                      </Caption>
                    ))}
                  </span>
                </BigButton>
              ))}
            </GroupItems>
            <GroupLabel>{g.title}</GroupLabel>
          </Group>
        ))}
        <CollapseRibbon aria-label="Collapse ribbon">
          <Chevron d="M1 6.500 5.500 1.500 10 6.500" w={11} h={7} sw={2} />
        </CollapseRibbon>
      </Ribbon>

      <Workspace>
        <ViewRail>
          <RailButton $active aria-label="Report view">
            <Svg w={18} h={18}>
              <path d="M1 0v16.500h17" stroke={INK} strokeWidth="1.500" />
              <path d="M3.500 4h3v10.500h-3ZM8.500 6.500h3v8h-3ZM13.500 1.500h3v13h-3Z" fill="#b3b0ad" stroke={INK} strokeWidth="1.300" />
            </Svg>
          </RailButton>
          <RailButton aria-label="Data view">
            <Svg w={21} h={20}>
              <path d="M1 1h19v18H1ZM1 4h19M1 9h19M1 14h19M7.300 4v15M13.700 4v15" stroke="#7a7876" strokeWidth="1.400" />
            </Svg>
          </RailButton>
          <RailButton aria-label="Model view">
            <Svg w={24} h={24}>
              <path d="M1 7.500h9.500v9H1ZM1 11h9.500M14 1h9.500v9H14ZM14 4.500h9.500M14 14h9.500v9H14ZM14 17.500h9.500M6 7.500V3.500h8M6 16.500V20h8" stroke="#7a7876" strokeWidth="1.500" />
            </Svg>
          </RailButton>
        </ViewRail>

        <Center>
          <Stage>
            <CanvasArea>
              <Selection>
                <ReportPage>
                  <DataTable>
                    <thead>
                      <tr>
                        <th scope="col">Available Beds</th>
                        <th scope="col">In House Census</th>
                        <th scope="col">Month Budget</th>
                      </tr>
                    </thead>
                    <tbody>
                      <tr>
                        <td>11513386</td>
                        <td>3810385</td>
                        <td>3,886,515.00</td>
                      </tr>
                    </tbody>
                  </DataTable>
                </ReportPage>
              </Selection>
            </CanvasArea>
            <FiltersPane>
              <button aria-label="Expand filters">
                <Chevron d={LEFT} />
              </button>
              <FunnelSlot>
                <Svg w={14} h={15}>
                  <path d="M13 .700v13.600L6 9H.700V6H6Z" stroke={INK} strokeWidth="1.200" />
                </Svg>
              </FunnelSlot>
              <FiltersLabel>Filters</FiltersLabel>
            </FiltersPane>
          </Stage>
          <PageTabs>
            <TabArrows>
              <ArrowButton aria-label="Previous page">
                <Svg w={5} h={10}><path d="M5 0v10L0 5Z" fill="#c8c6c4" stroke="none" /></Svg>
              </ArrowButton>
              <ArrowButton aria-label="Next page">
                <Svg w={5} h={10}><path d="M0 0v10l5-5Z" fill="#c8c6c4" stroke="none" /></Svg>
              </ArrowButton>
            </TabArrows>
            <PageTab>Census Details</PageTab>
            <PageTab $active>Page 1</PageTab>
            <AddPage aria-label="New page">
              <Svg w={15} h={15}><path d="M7.500 0v15M0 7.500h15" stroke="#7a7876" strokeWidth="4.500" /></Svg>
            </AddPage>
          </PageTabs>
        </Center>

        <Panel $width={226}>
          <PanelHead>
            <Heading>Visualizations</Heading>
            <IconButton aria-label="Collapse Visualizations"><Chevron d={RIGHT} /></IconButton>
          </PanelHead>
          <StandardVisuals>
            {gallery.map(([name, art]) => <VisualButton key={name} name={name} art={art} />)}
          </StandardVisuals>
          <CustomVisuals>
            {customGallery.map(([name, art]) => <VisualButton key={name} name={name} art={art} />)}
          </CustomVisuals>
          <Modes>
            <ModeTab $active aria-label="Fields">
              <Svg w={26} h={25}>
                <path d="M0 1h20" stroke={INK} strokeWidth="1.600" />
                <path d="M.700 4.700h24.600v8H.700ZM.700 16h24.600v8H.700Z" stroke={INK} strokeWidth="1.500" strokeDasharray="2 1" />
              </Svg>
            </ModeTab>
            <ModeTab aria-label="Format">
              <Svg w={24} h={25}>
                <path d="M1 1h18v5H1ZM19 3.500h4v6H11v3.500M8.500 13h5.500v11.500H8.500Z" stroke={INK} strokeWidth="1.500" />
              </Svg>
            </ModeTab>
          </Modes>
          <WellLabel>Values</WellLabel>
          <Well>Add data fields here</Well>
          <DrillTitle>Drill through</DrillTitle>
          <OptionLabel>Cross-report</OptionLabel>
          <ToggleRow>
            Off
            <Toggle type="checkbox" role="switch" aria-label="Cross-report" />
          </ToggleRow>
          <OptionLabel>Keep all filters</OptionLabel>
          <ToggleRow>
            On
            <Toggle type="checkbox" role="switch" defaultChecked aria-label="Keep all filters" />
          </ToggleRow>
          <Well $compact>Add drill-through fields here</Well>
        </Panel>

        <Panel $width={226}>
          <PanelHead>
            <Heading>Fields</Heading>
            <IconButton aria-label="Collapse Fields"><Chevron d={RIGHT} /></IconButton>
          </PanelHead>
          <FieldSearch>
            <Magnifier color={INK} />
            <SearchInput $tint="#605e5c" placeholder="Search" aria-label="Search fields" />
          </FieldSearch>
          <FieldScroller>
            <FieldList>
              {fields.map((f, i) => <FieldItem key={i} field={f} />)}
            </FieldList>
            <ScrollTrack><ScrollThumb /></ScrollTrack>
          </FieldScroller>
        </Panel>
      </Workspace>

      <StatusBar>Page 2 of 2</StatusBar>
    </Shell>
  );
}
